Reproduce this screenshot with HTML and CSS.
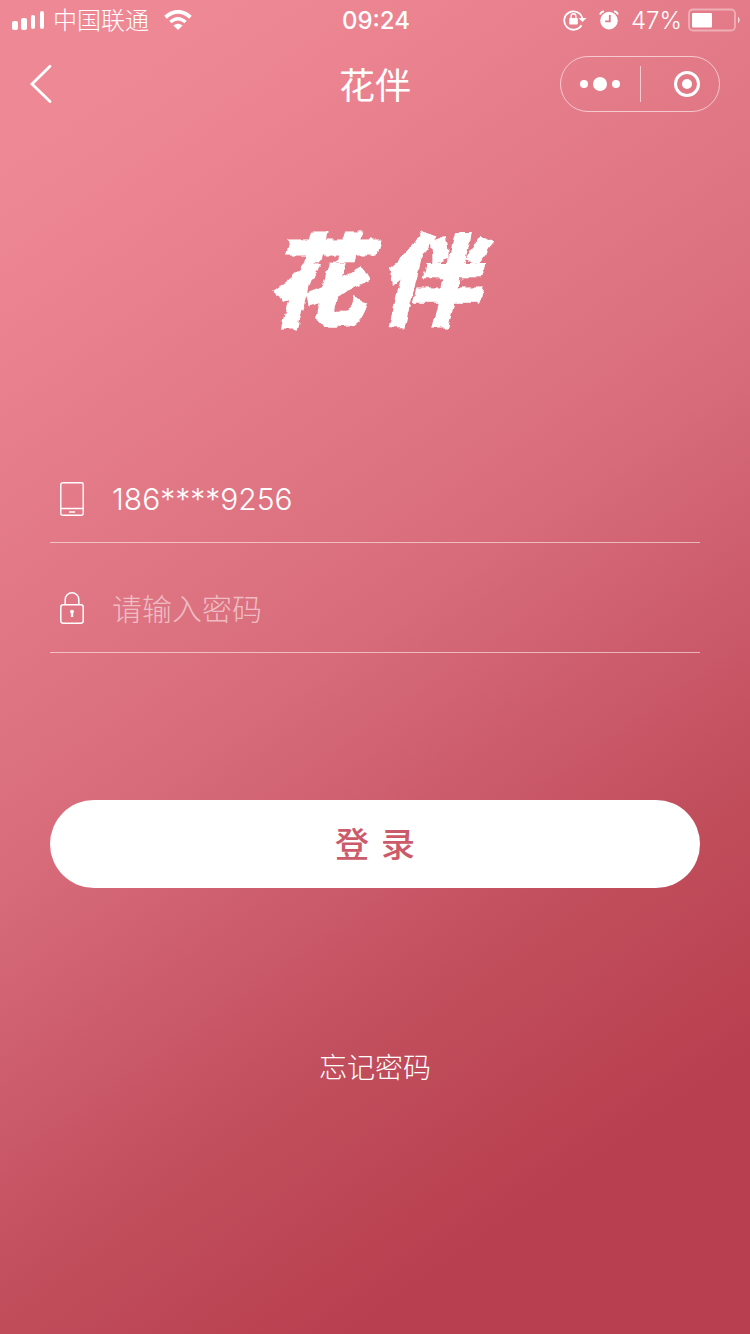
FILE: index.html
```
<!DOCTYPE html>
<html lang="zh-CN">
   <head>
      <meta charset="UTF-8">
      <meta name="viewport" content="width=device-width, initial-scale=1">
      <title>花伴</title>
      <link rel="stylesheet" href="styles.css">
   </head>
   <body>
      <div class="status-bar">
         <div class="status-left">
            <svg width="32" height="20" viewBox="0 0 32 20" fill="#fff">
               <rect x="0" y="11" width="6" height="9" rx="2"/>
               <rect x="9" y="8" width="6" height="12" rx="2"/>
               <rect x="19" y="5" width="4" height="14" rx="2"/>
               <rect x="28" y="1" width="4" height="18" rx="2"/>
            </svg>
            <span class="carrier">中国联通</span>
            <svg class="wifi" width="28" height="20" viewBox="0 0 28 20">
               <path d="M1.5 7.2Q14 -3.6 26.5 7.2" fill="none" stroke="#fff" stroke-width="3.8"/>
               <path d="M6.4 12Q14 5.4 21.6 12" fill="none" stroke="#fff" stroke-width="3.4"/>
               <path d="M9.4 15.6Q14 12 18.6 15.6L14 20Z" fill="#fff"/>
            </svg>
         </div>
         <span class="time">09:24</span>
         <div class="status-right">
            <svg width="24" height="22" viewBox="0 0 24 22">
               <path d="M18.4 16.2A9.2 9.2 0 1 1 19.3 9" fill="none" stroke="#fff" stroke-width="1.8"/>
               <path d="M15.5 9H23.5L19.5 13Z" fill="#fff"/>
               <rect x="6.2" y="9" width="8.6" height="6.6" rx="1" fill="#fff"/>
               <path d="M8.1 10V7.2A2.4 2.4 0 0 1 12.9 7.2V10" fill="none" stroke="#fff" stroke-width="1.4"/>
            </svg>
            <svg class="alarm" width="20" height="20" viewBox="0 0 20 20">
               <circle cx="10" cy="10.6" r="8.8" fill="#fff"/>
               <path d="M1 4.5Q2 1.6 5 1.4M19 4.5Q18 1.6 15 1.4" fill="none" stroke="#fff" stroke-width="1.8"/>
               <path d="M10.8 5V11.4H6.2" fill="none" stroke="#e37a89" stroke-width="1.8"/>
            </svg>
            <span class="percent">47%</span>
            <svg width="52" height="24" viewBox="0 0 52 24">
               <rect x="1" y="1.5" width="46" height="21" rx="4" fill="none" stroke="#fff" stroke-opacity=".4" stroke-width="1.8"/>
               <rect x="4" y="5" width="20" height="14.5" rx="1" fill="#fff"/>
               <path d="M50 8.5Q53.5 12 50 15.5Z" fill="#fff" fill-opacity=".7"/>
            </svg>
         </div>
      </div>
      <div class="nav-bar">
         <button type="button" class="back" aria-label="返回">
            <svg width="24" height="40" viewBox="0 0 24 40">
               <path d="M20 2.2L2 20L20 37.5" fill="none" stroke="#fff" stroke-width="2.8" stroke-linecap="round"/>
            </svg>
         </button>
         <h1 class="nav-title">花伴</h1>
         <div class="capsule">
            <button type="button" class="capsule-btn" aria-label="更多">
               <svg width="42" height="16" viewBox="0 0 42 16" fill="#fff">
                  <circle cx="4" cy="8" r="4"/>
                  <circle cx="20" cy="8" r="7"/>
                  <circle cx="36" cy="8" r="4"/>
               </svg>
            </button>
            <button type="button" class="capsule-btn capsule-close" aria-label="关闭">
               <svg width="28" height="28" viewBox="0 0 28 28">
                  <circle cx="14" cy="14" r="11.5" fill="none" stroke="#fff" stroke-width="3"/>
                  <circle cx="14" cy="14" r="5" fill="#fff"/>
               </svg>
            </button>
         </div>
      </div>

      <div class="logo"><span>花</span><span>伴</span></div>

      <form class="login-form">
         <div class="field">
            <label for="phone" aria-label="手机号">
               <svg width="24" height="34" viewBox="0 0 24 34" fill="none" stroke="#fff" stroke-width="1.4">
                  <rect x=".8" y=".8" width="22.4" height="32.4" rx="1.6"/>
                  <path d="M1 26.5H23M9 30H15"/>
               </svg>
            </label>
            <input type="text" id="phone" name="phone" value="186****9256">
         </div>
         <div class="field">
            <label for="password" aria-label="密码">
               <svg width="24" height="34" viewBox="0 0 24 34" fill="none" stroke="#fff" stroke-width="1.5">
                  <rect x=".8" y="12.8" width="22.4" height="18.4" rx="2.4"/>
                  <path d="M5.2 12.5V7.6A6.8 6.8 0 0 1 18.8 7.6V12.5"/>
                  <path d="M10 19.8A2 2 0 1 1 14 19.8L13.2 21.6V25H10.9V21.6Z" fill="#fff" stroke="none"/>
               </svg>
            </label>
            <input type="password" id="password" name="password" placeholder="请输入密码">
         </div>
         <button type="button" class="btn-login"><span>登</span><span>录</span></button>
      </form>
      <a class="forget" href="#">忘记密码</a>

      <!-- rough brush edge for the logo -->
      <svg class="defs" width="0" height="0">
         <filter id="brush" x="-10%" y="-10%" width="120%" height="120%">
            <feTurbulence type="fractalNoise" baseFrequency="0.12" numOctaves="2" seed="4" result="noise"/>
            <feDisplacementMap in="SourceGraphic" in2="noise" scale="6" xChannelSelector="R" yChannelSelector="G"/>
         </filter>
      </svg>
   </body>
</html>
```
FILE: styles.css
```
* {
box-sizing: border-box;
}
*:focus {
outline: none;
}
body {
margin: 0;
min-height: 100vh;
display: flex;
flex-direction: column;
font-family: Inter, "Noto Sans CJK SC", sans-serif;
color: #fff;
background: linear-gradient(145deg, #ef8895 9%, #e07684 35%, #d76b79 48%, #c95868 62%, #c24f5d 69%, #b83f4f 85%);
}
svg {
display: block;
}
button {
padding: 0;
border: 0;
background: none;
color: inherit;
font-family: inherit;
}
.status-bar {
display: grid;
grid-template-columns: 1fr auto 1fr;
align-items: center;
height: 40px;
padding: 0 10px 0 12px;
font-size: 24px;
line-height: 24px;
}
.status-left, .status-right {
display: flex;
align-items: center;
}
.status-right {
justify-content: flex-end;
}
.carrier, .time, .percent {
padding-top: 2px;
}
.carrier {
margin: 0 15px 0 9px;
font-weight: 300;
}
.time {
font-weight: 500;
}
.alarm {
margin: 0 12px;
}
.percent {
margin-right: 6px;
font-weight: 300;
}
.nav-bar {
display: grid;
grid-template-columns: 1fr auto 1fr;
align-items: center;
height: 88px;
padding: 0 30px;
}
.back {
justify-self: start;
}
.nav-title {
margin: 0;
padding-top: 4px;
font-size: 36px;
line-height: 40px;
font-weight: 400;
}
.capsule {
justify-self: end;
display: flex;
align-items: center;
width: 160px;
height: 56px;
border: 1px solid rgba(255, 255, 255, .6);
border-radius: 28px;
}
.capsule-btn {
display: flex;
width: 50%;
align-items: center;
justify-content: center;
height: 36px;
}
.capsule-close {
padding-left: 14px;
border-left: 1px solid rgba(255, 255, 255, .6);
}
.logo {
display: flex;
justify-content: center;
gap: 12px;
margin: 104px 8px 0 0;
font-size: 100px;
line-height: 100px;
font-weight: 900;
font-style: italic;
-webkit-text-stroke: 2px #fff;
filter: url(#brush);
}
.login-form {
margin: 101px 50px 0;
}
.field {
display: flex;
align-items: center;
gap: 28px;
height: 110px;
padding: 22px 10px 0;
border-bottom: 1px solid rgba(255, 255, 255, .55);
}
.field input {
flex: 1;
min-width: 0;
height: 60px;
padding: 0;
border: 0;
background: none;
color: #fff;
font-family: inherit;
font-size: 30px;
font-weight: 300;
}
.field input::placeholder {
color: rgba(255, 255, 255, .55);
opacity: 1;
}
.btn-login {
display: flex;
align-items: center;
justify-content: center;
gap: 12px;
width: 100%;
height: 88px;
padding-top: 2px;
margin-top: 147px;
border-radius: 44px;
background: #fff;
color: #cb5b6b;
font-size: 34px;
line-height: 40px;
font-weight: 500;
}
.forget {
align-self: center;
margin-top: 160px;
color: #fff;
font-size: 28px;
line-height: 40px;
font-weight: 300;
text-decoration: none;
}
.defs {
position: absolute;
}
```
